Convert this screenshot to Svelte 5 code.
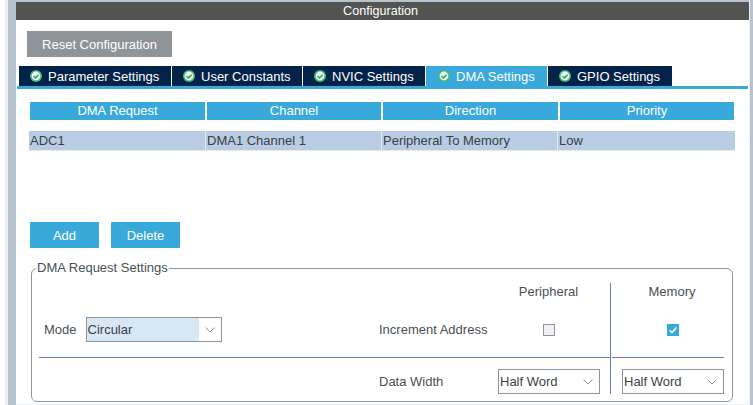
<script>
	const tabs = [
		{ label: 'Parameter Settings', width: 152 },
		{ label: 'User Constants', width: 130 },
		{ label: 'NVIC Settings', width: 122 },
		{ label: 'DMA Settings', width: 121, active: true },
		{ label: 'GPIO Settings', width: 124 }
	];
	const columns = ['DMA Request', 'Channel', 'Direction', 'Priority'];
	const row = ['ADC1', 'DMA1 Channel 1', 'Peripheral To Memory', 'Low'];
</script>

{#snippet chevron()}
	<svg class="chevron" width="10" height="6" viewBox="0 0 10 6">
		<path d="M.5 .5l4.5 4.5 4.5-4.5" fill="none" stroke="#8a8f94" stroke-width="1" />
	</svg>
{/snippet}

<div class="page">
	<div class="gutter"></div>
	<main>
		<div class="title">Configuration</div>
		<button class="btn reset">Reset Configuration</button>

		<div class="tabs">
			{#each tabs as tab}
				<div class="tab" class:active={tab.active} style="width: {tab.width}px">
					<svg width="12" height="12" viewBox="0 0 12 12">
						<circle cx="6" cy="6" r="6" fill="#45b978" />
						<circle cx="6" cy="6" r="4.4" fill="#f2fbf5" />
						<path d="M3.4 6l2 2 3.2-3.4" fill="none" stroke="#36a866" stroke-width="1.6" />
					</svg>
					<span>{tab.label}</span>
				</div>
			{/each}
		</div>

		<div class="table">
			<div class="thead">
				{#each columns as col}
					<div>{col}</div>
				{/each}
			</div>
			<div class="trow">
				{#each row as cell}
					<div>{cell}</div>
				{/each}
			</div>
		</div>

		<div class="actions">
			<button class="btn blue">Add</button>
			<button class="btn blue">Delete</button>
		</div>

		<fieldset>
			<legend>DMA Request Settings</legend>
			<div class="matrix">
				<div class="head peripheral">Peripheral</div>
				<div class="head memory">Memory</div>
				<div class="vline"></div>

				<div class="mode">
					<span>Mode</span>
					<div class="select focused"><span>Circular</span>{@render chevron()}</div>
				</div>
				<div class="label inc">Increment Address</div>
				<div class="check peripheral"><span class="box"></span></div>
				<div class="check memory">
					<span class="box on">
						<svg width="12" height="12" viewBox="0 0 12 12">
							<path d="M2.6 6.2l2.4 2.4 4.4-5" fill="none" stroke="#fff" stroke-width="1.5" />
						</svg>
					</span>
				</div>

				<div class="hr left"></div>
				<div class="hr right"></div>

				<div class="label data">Data Width</div>
				<div class="select peripheral end"><span>Half Word</span>{@render chevron()}</div>
				<div class="select memory end"><span>Half Word</span>{@render chevron()}</div>
			</div>
		</fieldset>
	</main>
	<div class="edge"></div>
</div>

<style>
	:global(body) {
		margin: 0;
		background: #fff;
		font-family: 'Liberation Sans', Arial, sans-serif;
	}

	.page {
		display: flex;
		width: 753px;
		height: 405px;
		overflow: hidden;
		background: #fff;
		font-size: 13px;
		color: #4a4f55;
	}

	.gutter {
		width: 8px;
		margin-left: 5px;
		border-left: 3px solid #eef1f3;
		background: #b6c3cc;
		flex: none;
	}

	main {
		width: 733px;
		flex: none;
		border-top: 2px solid #b6c3cc;
		border-bottom: 1px solid #eef1f3;
		box-sizing: border-box;
		height: 405px;
	}

	.edge {
		flex: 1;
		background: #b6c3cc;
		border-left: 1px solid #eef1f3;
	}

	.title {
		height: 18px;
		line-height: 18px;
		padding-right: 4px;
		background: #525452;
		color: #fff;
		text-align: center;
		font-size: 12.6px;
	}

	.btn {
		display: block;
		border: none;
		padding: 0;
		color: #fff;
		font: inherit;
		text-align: center;
	}

	.reset {
		width: 145px;
		height: 26px;
		margin: 11px 0 0 11px;
		background: #8f9499;
	}

	.tabs {
		display: flex;
		gap: 1px;
		height: 20px;
		margin: 9px 1px 0 1px;
		padding-left: 2px;
		border-bottom: 3px solid #39a9db;
	}

	.tab {
		display: flex;
		align-items: center;
		gap: 6px;
		padding-left: 11px;
		box-sizing: border-box;
		background: #03234b;
		color: #fff;
		white-space: nowrap;
	}

	.tab.active {
		background: #39a9db;
		padding-left: 12px;
	}

	.table {
		margin: 13px 0 0 13px;
		width: 706px;
	}

	.thead,
	.trow {
		display: grid;
	}

	.thead {
		grid-template-columns: 175px 174px 175px 174px;
		gap: 2px;
		margin-left: 1px;
		height: 18px;
		line-height: 18px;
		background: #fff;
	}

	.thead div {
		background: #39a9db;
		color: #fff;
		text-align: center;
	}

	.trow {
		grid-template-columns: 176px 175px 175px 177px;
		gap: 1px;
		margin-top: 11px;
		height: 19px;
		line-height: 19px;
		background: #e4e9ef;
		width: 706px;
		border-bottom: 1px solid #e4e9ef;
		color: #3b3f46;
	}

	.trow div {
		background: #b8cde4;
		padding-left: 1px;
	}

	.actions {
		display: flex;
		gap: 12px;
		margin: 71px 0 0 14px;
	}

	.blue {
		width: 69px;
		height: 26px;
		background: #39a9db;
	}

	fieldset {
		margin: 13px 0 0 15px;
		padding: 0 7px;
		width: 702px;
		height: 141px;
		box-sizing: border-box;
		border: 1px solid #8f9499;
		border-radius: 6px;
		min-width: 0;
	}

	legend {
		padding: 0 1px;
		margin-left: -3px;
		line-height: 14px;
	}

	.matrix {
		display: grid;
		grid-template-columns: 340px 119px 101px 11px 2px 10px 102px;
		grid-template-rows: 20px 54px 1px 36px;
		margin-top: 8px;
	}

	.head {
		grid-row: 1;
		text-align: center;
		line-height: 18px;
	}

	.head.memory {
		padding-right: 2px;
	}

	.peripheral {
		grid-column: 3;
	}

	.memory {
		grid-column: 7;
	}

	.vline {
		grid-column: 5;
		grid-row: 1 / 5;
		width: 1px;
		background: #5f7fc0;
	}

	.mode {
		grid-column: 1;
		grid-row: 2;
		display: flex;
		align-items: center;
		gap: 9px;
		padding-left: 5px;
		margin-bottom: 1px;
	}

	.mode .select {
		width: 136px;
	}

	.label {
		align-self: center;
		white-space: nowrap;
	}

	.inc {
		grid-column: 2;
		grid-row: 2;
		margin-bottom: 1px;
	}

	.check {
		grid-row: 2;
		display: flex;
		align-items: center;
		justify-content: center;
		margin-bottom: 1px;
	}

	.box {
		display: block;
		width: 12px;
		height: 12px;
		box-sizing: border-box;
		border: 1px solid #8f9499;
		background: #eff1f4;
	}

	.box.on {
		border: none;
		background: #39a9db;
	}

	.box svg {
		display: block;
	}

	.hr {
		grid-row: 3;
		background: #5f7fc0;
	}

	.hr.left {
		grid-column: 1 / 5;
	}

	.hr.right {
		grid-column: 6 / 8;
	}

	.data {
		grid-column: 2;
		grid-row: 4;
		align-self: end;
		line-height: 25px;
	}

	.select {
		position: relative;
		height: 25px;
		line-height: 23px;
		box-sizing: border-box;
		border: 1px solid #8f9499;
		background: #fff;
		padding-left: 1px;
		color: #3b3f46;
	}

	.select.end {
		grid-row: 4;
		align-self: end;
	}

	.select.peripheral {
		margin-right: -1px;
	}

	.select.focused {
		padding-left: 0;
	}

	.select.focused span {
		display: block;
		width: 112px;
		height: 100%;
		padding-left: 1px;
		box-sizing: border-box;
		background: #d8e7f4;
	}

	.chevron {
		position: absolute;
		right: 6px;
		top: 9px;
	}
</style>
